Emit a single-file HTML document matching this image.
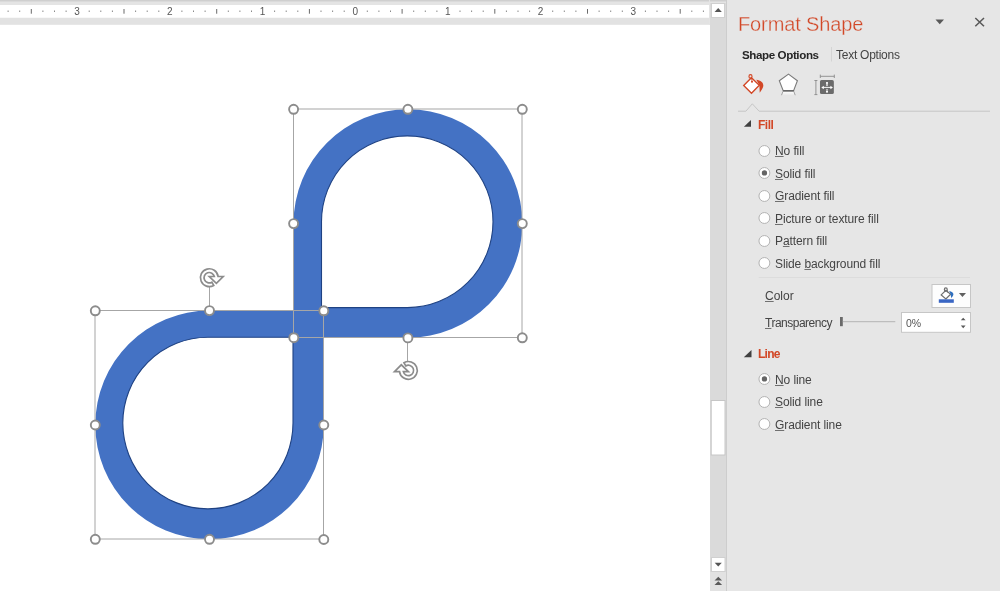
<!DOCTYPE html>
<html><head><meta charset="utf-8"><style>
html,body{margin:0;padding:0;width:1000px;height:591px;overflow:hidden;background:#fff;font-family:"Liberation Sans",sans-serif;}
.a{position:absolute;white-space:nowrap;will-change:transform;}
#panel{position:absolute;left:727px;top:0;width:273px;height:591px;background:#e6e6e6;}
.t{position:absolute;white-space:nowrap;font-size:12px;color:#444;line-height:14px;}
.radio{position:absolute;width:10px;height:10px;border:1px solid #ababab;border-radius:50%;background:#fff;}
.radio.on::after{content:"";position:absolute;left:2.5px;top:2.5px;width:5px;height:5px;border-radius:50%;background:#5a5a5a;}
u{text-decoration:underline;text-underline-offset:1px;text-decoration-thickness:1px;text-decoration-color:#707070;}
</style></head><body>
<svg width="1000" height="591" style="position:absolute;left:0;top:0;will-change:transform">
<!-- top strip -->
<rect x="0" y="0" width="727" height="5" fill="#e4e4e4"/>
<rect x="0" y="0" width="1000" height="1" fill="#cfcfcf"/>
<rect x="0" y="1" width="1000" height="1" fill="#dadada"/>
<rect x="0" y="5" width="709" height="12.75" fill="#fff"/>
<rect x="0" y="17.75" width="710" height="7.05" fill="#e2e2e2"/>
<g font-family="Liberation Sans" font-size="10" fill="#555" text-anchor="middle">
<rect x="7.6" y="10.5" width="1" height="1.5" fill="#8a8a8a"/>
<rect x="19.2" y="10.5" width="1" height="1.5" fill="#8a8a8a"/>
<rect x="30.8" y="9" width="1" height="4.7" fill="#6a6a6a"/>
<rect x="42.4" y="10.5" width="1" height="1.5" fill="#8a8a8a"/>
<rect x="54.0" y="10.5" width="1" height="1.5" fill="#8a8a8a"/>
<rect x="65.6" y="10.5" width="1" height="1.5" fill="#8a8a8a"/>
<text x="77.1" y="15.2">3</text>
<rect x="88.7" y="10.5" width="1" height="1.5" fill="#8a8a8a"/>
<rect x="100.3" y="10.5" width="1" height="1.5" fill="#8a8a8a"/>
<rect x="111.9" y="10.5" width="1" height="1.5" fill="#8a8a8a"/>
<rect x="123.5" y="9" width="1" height="4.7" fill="#6a6a6a"/>
<rect x="135.1" y="10.5" width="1" height="1.5" fill="#8a8a8a"/>
<rect x="146.7" y="10.5" width="1" height="1.5" fill="#8a8a8a"/>
<rect x="158.3" y="10.5" width="1" height="1.5" fill="#8a8a8a"/>
<text x="169.8" y="15.2">2</text>
<rect x="181.4" y="10.5" width="1" height="1.5" fill="#8a8a8a"/>
<rect x="193.0" y="10.5" width="1" height="1.5" fill="#8a8a8a"/>
<rect x="204.6" y="10.5" width="1" height="1.5" fill="#8a8a8a"/>
<rect x="216.2" y="9" width="1" height="4.7" fill="#6a6a6a"/>
<rect x="227.8" y="10.5" width="1" height="1.5" fill="#8a8a8a"/>
<rect x="239.4" y="10.5" width="1" height="1.5" fill="#8a8a8a"/>
<rect x="251.0" y="10.5" width="1" height="1.5" fill="#8a8a8a"/>
<text x="262.6" y="15.2">1</text>
<rect x="274.1" y="10.5" width="1" height="1.5" fill="#8a8a8a"/>
<rect x="285.7" y="10.5" width="1" height="1.5" fill="#8a8a8a"/>
<rect x="297.3" y="10.5" width="1" height="1.5" fill="#8a8a8a"/>
<rect x="308.9" y="9" width="1" height="4.7" fill="#6a6a6a"/>
<rect x="320.5" y="10.5" width="1" height="1.5" fill="#8a8a8a"/>
<rect x="332.1" y="10.5" width="1" height="1.5" fill="#8a8a8a"/>
<rect x="343.7" y="10.5" width="1" height="1.5" fill="#8a8a8a"/>
<text x="355.2" y="15.2">0</text>
<rect x="366.8" y="10.5" width="1" height="1.5" fill="#8a8a8a"/>
<rect x="378.4" y="10.5" width="1" height="1.5" fill="#8a8a8a"/>
<rect x="390.0" y="10.5" width="1" height="1.5" fill="#8a8a8a"/>
<rect x="401.6" y="9" width="1" height="4.7" fill="#6a6a6a"/>
<rect x="413.2" y="10.5" width="1" height="1.5" fill="#8a8a8a"/>
<rect x="424.8" y="10.5" width="1" height="1.5" fill="#8a8a8a"/>
<rect x="436.4" y="10.5" width="1" height="1.5" fill="#8a8a8a"/>
<text x="447.9" y="15.2">1</text>
<rect x="459.5" y="10.5" width="1" height="1.5" fill="#8a8a8a"/>
<rect x="471.1" y="10.5" width="1" height="1.5" fill="#8a8a8a"/>
<rect x="482.7" y="10.5" width="1" height="1.5" fill="#8a8a8a"/>
<rect x="494.3" y="9" width="1" height="4.7" fill="#6a6a6a"/>
<rect x="505.9" y="10.5" width="1" height="1.5" fill="#8a8a8a"/>
<rect x="517.5" y="10.5" width="1" height="1.5" fill="#8a8a8a"/>
<rect x="529.1" y="10.5" width="1" height="1.5" fill="#8a8a8a"/>
<text x="540.6" y="15.2">2</text>
<rect x="552.2" y="10.5" width="1" height="1.5" fill="#8a8a8a"/>
<rect x="563.8" y="10.5" width="1" height="1.5" fill="#8a8a8a"/>
<rect x="575.4" y="10.5" width="1" height="1.5" fill="#8a8a8a"/>
<rect x="587.0" y="9" width="1" height="4.7" fill="#6a6a6a"/>
<rect x="598.6" y="10.5" width="1" height="1.5" fill="#8a8a8a"/>
<rect x="610.2" y="10.5" width="1" height="1.5" fill="#8a8a8a"/>
<rect x="621.8" y="10.5" width="1" height="1.5" fill="#8a8a8a"/>
<text x="633.4" y="15.2">3</text>
<rect x="644.9" y="10.5" width="1" height="1.5" fill="#8a8a8a"/>
<rect x="656.5" y="10.5" width="1" height="1.5" fill="#8a8a8a"/>
<rect x="668.1" y="10.5" width="1" height="1.5" fill="#8a8a8a"/>
<rect x="679.7" y="9" width="1" height="4.7" fill="#6a6a6a"/>
<rect x="691.3" y="10.5" width="1" height="1.5" fill="#8a8a8a"/>
<rect x="702.9" y="10.5" width="1" height="1.5" fill="#8a8a8a"/>
</g>
<!-- scrollbar -->
<rect x="709" y="0" width="1" height="24.5" fill="#e4e4e4"/>
<rect x="710" y="3" width="16" height="588" fill="#dadada"/>
<rect x="726" y="0" width="1" height="591" fill="#cdcdcd"/>
<rect x="711.5" y="3.5" width="13" height="14" fill="#fff" stroke="#d0d0d0"/>
<path d="M714.6 11.9 L718.2 8.1 L721.8 11.9 Z" fill="#555"/>
<rect x="711.2" y="400.5" width="13.8" height="54.5" fill="#fff" stroke="#c6c6c6"/>
<rect x="711.5" y="557.5" width="13.5" height="14" fill="#fff" stroke="#d0d0d0"/>
<path d="M714.7 562.8 L721.8 562.8 L718.25 566.5 Z" fill="#555"/>
<rect x="710" y="572" width="16" height="19" fill="#e2e2e2"/>
<path d="M714.5 580.6 L718.3 576.7 L722.1 580.6 Z M714.5 584.9 L718.3 581.2 L722.1 584.9 Z" fill="#5a5a5a"/>

<!-- shapes -->
<path fill="#4472c4" fill-rule="evenodd" d="M293.5 337.7 L293.5 223.5 A114.45 114.2 0 0 1 407.95 109.3 A114.45 114.2 0 0 1 522.4 223.5 A114.45 114.2 0 0 1 407.95 337.7 Z
 M321.5 307.6 L321.5 221.75 A85.75 85.85 0 0 1 407.25 135.9 A85.75 85.85 0 0 1 493 221.75 A85.75 85.85 0 0 1 407.25 307.6 Z"/>
<path fill="none" stroke="#1f4283" stroke-width="1.1" d="M321.5 307.6 L321.5 221.75 A85.75 85.85 0 0 1 407.25 135.9 A85.75 85.85 0 0 1 493 221.75 A85.75 85.85 0 0 1 407.25 307.6 Z"/>
<path fill="#4472c4" fill-rule="evenodd" d="M323.8 310.5 L323.8 424.9 A114.25 114.4 0 0 1 209.55 539.3 A114.25 114.4 0 0 1 95.3 424.9 A114.25 114.4 0 0 1 209.55 310.5 Z
 M293 337.3 L293 423.1 A85.1 85.8 0 0 1 207.9 508.9 A85.1 85.8 0 0 1 122.8 423.1 A85.1 85.8 0 0 1 207.9 337.3 Z"/>
<path fill="none" stroke="#1f4283" stroke-width="1.1" d="M293 337.3 L293 423.1 A85.1 85.8 0 0 1 207.9 508.9 A85.1 85.8 0 0 1 122.8 423.1 A85.1 85.8 0 0 1 207.9 337.3 Z"/>

<!-- selection boxes -->
<g fill="none" stroke="#a6a6a6" stroke-width="1">
<rect x="293.5" y="109" width="228.5" height="228.5"/>
<rect x="95" y="310.5" width="228.5" height="228.5"/>
<line x1="209.5" y1="287" x2="209.5" y2="310.5"/>
<line x1="407.5" y1="337.5" x2="407.5" y2="361"/>
</g>
<g fill="#fff" stroke="#8c8c8c" stroke-width="1.9">
<circle cx="293.6" cy="109.3" r="4.5"/><circle cx="407.9" cy="109.3" r="4.5"/><circle cx="522.3" cy="109.3" r="4.5"/>
<circle cx="293.6" cy="223.6" r="4.5"/><circle cx="522.3" cy="223.6" r="4.5"/>
<circle cx="293.8" cy="337.7" r="4.5"/><circle cx="407.9" cy="337.9" r="4.5"/><circle cx="522.3" cy="337.8" r="4.5"/>
<circle cx="95.3" cy="310.8" r="4.5"/><circle cx="209.5" cy="310.6" r="4.5"/><circle cx="323.8" cy="310.8" r="4.5"/>
<circle cx="95.3" cy="425" r="4.5"/><circle cx="323.8" cy="425" r="4.5"/>
<circle cx="95.3" cy="539.3" r="4.5"/><circle cx="209.5" cy="539.3" r="4.5"/><circle cx="323.8" cy="539.5" r="4.5"/>
</g>
<!-- rotation handles -->
<g transform="translate(209.27 277.7)"><path d="M4.45 7.7 A8.9 8.9 0 1 1 8.86 -1.18 L13.9 -1.18 L7.1 5.6 L0 -1.18 L5.06 -1.18 A5.2 5.2 0 1 0 2.6 4.5 Z" fill="#fff" stroke="#8c8c8c" stroke-width="1.7" stroke-linejoin="miter"/></g>
<g transform="translate(408.4 370.4) rotate(180)"><path d="M4.45 7.7 A8.9 8.9 0 1 1 8.86 -1.18 L13.9 -1.18 L7.1 5.6 L0 -1.18 L5.06 -1.18 A5.2 5.2 0 1 0 2.6 4.5 Z" fill="#fff" stroke="#8c8c8c" stroke-width="1.7" stroke-linejoin="miter"/></g>
</svg>

<div id="panel"></div>
<svg width="1000" height="591" style="position:absolute;left:0;top:0;pointer-events:none">
<!-- dropdown and close -->
<path d="M935.5 19.5 L944 19.5 L939.75 24.2 Z" fill="#595959"/>
<path d="M975.3 18 L984 26.2 M984 18 L975.3 26.2" stroke="#595959" stroke-width="1.55"/>
<!-- tab separator -->
<rect x="831" y="47" width="1" height="14.5" fill="#d4d4d4"/>
<!-- fill icon -->
<g>
<path d="M743.7 85.5 L751.4 77.8 L759.3 85.3 L751.5 93.2 Z" fill="#fff" stroke="#d24726" stroke-width="1.35" stroke-linejoin="miter"/>
<ellipse cx="750.5" cy="76.4" rx="1.55" ry="1.75" fill="none" stroke="#d24726" stroke-width="1.1"/>
<path d="M751.4 78 L752 81" stroke="#d24726" stroke-width="0.8"/>
<circle cx="752" cy="81.7" r="1.05" fill="#d24726"/>
<path d="M756.3 79.7 C760.5 80.3 763.6 82.3 763.3 86 C763 88.6 761 90.6 759.7 92.8 L759.4 85.3 Z" fill="#d24726"/>
</g>
<!-- pentagon icon -->
<defs><linearGradient id="pg" x1="0" y1="0" x2="0" y2="1"><stop offset="0" stop-color="#fff"/><stop offset="1" stop-color="#fff" stop-opacity="0"/></linearGradient></defs>
<path d="M783 91.3 L794 91.3 L795.2 95.5 L781.6 95.5 Z" fill="url(#pg)"/>
<path d="M788.5 74.1 L797.4 80.7 L793.6 90.6 L783.2 90.6 L779.3 80.7 Z" fill="#fff" stroke="#7a7a7a" stroke-width="1.1"/>
<rect x="783" y="90" width="11" height="1.6" fill="#666"/>
<path d="M783 91.3 L781.5 95.2 M793.8 91.3 L795.2 95.2" stroke="#9a9a9a" stroke-width="0.9"/>
<!-- size icon -->
<rect x="819.98" y="80.1" width="13.87" height="13.9" rx="1.6" fill="#6b6b6b"/>
<rect x="826" y="82.1" width="2" height="1.8" fill="#fafafa"/><rect x="826" y="83.9" width="2" height="2.2" fill="#c4c4c4"/>
<rect x="826" y="88.9" width="2" height="1.8" fill="#b8b8b8"/><rect x="826" y="90.8" width="2" height="1.8" fill="#fafafa"/>
<path d="M823 87.45 L831.2 87.45" stroke="#e6e6e6" stroke-width="1.1"/>
<path d="M821.3 87.45 L823.8 85.7 L823.8 89.2 Z M832.9 87.45 L830.4 85.7 L830.4 89.2 Z" fill="#fff"/>
<path d="M820.3 76.3 L834.3 76.3 M820.3 74.6 L820.3 78 M834.3 74.6 L834.3 78" stroke="#8a8a8a" stroke-width="0.9"/>
<path d="M815.9 80.5 L815.9 94.6 M814.4 80.5 L817.4 80.5 M814.4 94.6 L817.4 94.6" stroke="#8a8a8a" stroke-width="0.9"/>
<!-- line with notch -->
<path d="M738 111.2 L745.9 111.2 L752.3 103.8 L759.1 111.2 L990 111.2" fill="none" stroke="#c6c6c6" stroke-width="1"/>
<!-- fill header triangle -->
<path d="M743.9 126.8 L751 120 L751 126.8 Z" fill="#404040"/>
<path d="M743.8 357.2 L751.5 350 L751.5 357.2 Z" fill="#404040"/>
<!-- separator -->
<rect x="758.7" y="277" width="211.3" height="1" fill="#dcdcdc"/>
<!-- color button -->
<rect x="932" y="284.5" width="38.5" height="23" fill="#fdfdfd" stroke="#c6c6c6" stroke-width="1"/>
<path d="M941.2 294.9 L945.9 290.3 L950.6 294.3 L945.9 298.9 Z" fill="#fff" stroke="#6e6e6e" stroke-width="1.2"/>
<ellipse cx="945.8" cy="289.6" rx="1.45" ry="1.75" fill="none" stroke="#6e6e6e" stroke-width="1.2"/>
<path d="M947.4 290.3 L947.4 292.6" stroke="#6e6e6e" stroke-width="0.9"/>
<path d="M949.2 291.1 C951.6 291.6 953.6 292.6 953.4 294.5 C953.2 296 952 297 951.3 298.2 L950.6 294.3 Z" fill="#2e6fbf"/>
<rect x="938.8" y="299.3" width="15" height="3.5" fill="#3a66c4"/>
<path d="M958.9 293 L966 293 L962.45 296.9 Z" fill="#606060"/>
<!-- slider -->
<rect x="840" y="317" width="2.8" height="9.2" fill="#6a6a6a"/>
<rect x="842.8" y="321.2" width="52.5" height="1" fill="#b4b4b4"/>
<!-- spin box -->
<rect x="901.5" y="312.5" width="69" height="19.8" fill="#fff" stroke="#c6c6c6" stroke-width="1"/>
<path d="M960.8 320.3 L965.6 320.3 L963.2 317.8 Z M960.8 325.6 L965.6 325.6 L963.2 328.2 Z" fill="#595959"/>
</svg>
<div class="a" style="left:737.9px;top:14.17px;font-size:20px;line-height:20px;color:#d24726;font-weight:400;letter-spacing:-0.12px;-webkit-text-stroke:0.3px #e6e6e6;">Format Shape</div>
<div class="a" style="left:741.6px;top:48.68px;font-size:11.6px;line-height:11.6px;color:#262626;font-weight:700;letter-spacing:-0.4px;">Shape Options</div>
<div class="a" style="left:835.8px;top:49.04px;font-size:12px;line-height:12px;color:#444;font-weight:400;letter-spacing:-0.25px;">Text Options</div>
<div class="a" style="left:758.0px;top:118.84px;font-size:12px;line-height:12px;color:#d24726;font-weight:700;letter-spacing:-0.5px;">Fill</div>
<svg class="a" style="left:756px;top:142.80px" width="17" height="17"><circle cx="8.4" cy="8" r="5.45" fill="#fff" stroke="#b2b2b2" stroke-width="1"/></svg>
<div class="a" style="left:774.8px;top:145.34px;font-size:12px;line-height:12px;color:#444;font-weight:400;letter-spacing:-0.1px;"><u>N</u>o fill</div>
<svg class="a" style="left:756px;top:165.20px" width="17" height="17"><circle cx="8.4" cy="8" r="5.45" fill="#fff" stroke="#b2b2b2" stroke-width="1"/><circle cx="8.45" cy="7.9" r="2.65" fill="#656565"/></svg>
<div class="a" style="left:774.8px;top:167.74px;font-size:12px;line-height:12px;color:#444;font-weight:400;letter-spacing:-0.1px;"><u>S</u>olid fill</div>
<svg class="a" style="left:756px;top:187.70px" width="17" height="17"><circle cx="8.4" cy="8" r="5.45" fill="#fff" stroke="#b2b2b2" stroke-width="1"/></svg>
<div class="a" style="left:774.8px;top:190.24px;font-size:12px;line-height:12px;color:#444;font-weight:400;letter-spacing:-0.1px;"><u>G</u>radient fill</div>
<svg class="a" style="left:756px;top:210.40px" width="17" height="17"><circle cx="8.4" cy="8" r="5.45" fill="#fff" stroke="#b2b2b2" stroke-width="1"/></svg>
<div class="a" style="left:774.8px;top:212.94px;font-size:12px;line-height:12px;color:#444;font-weight:400;letter-spacing:-0.1px;"><u>P</u>icture or texture fill</div>
<svg class="a" style="left:756px;top:232.80px" width="17" height="17"><circle cx="8.4" cy="8" r="5.45" fill="#fff" stroke="#b2b2b2" stroke-width="1"/></svg>
<div class="a" style="left:774.8px;top:235.34px;font-size:12px;line-height:12px;color:#444;font-weight:400;letter-spacing:-0.1px;">P<u>a</u>ttern fill</div>
<svg class="a" style="left:756px;top:255.00px" width="17" height="17"><circle cx="8.4" cy="8" r="5.45" fill="#fff" stroke="#b2b2b2" stroke-width="1"/></svg>
<div class="a" style="left:774.8px;top:257.54px;font-size:12px;line-height:12px;color:#444;font-weight:400;letter-spacing:-0.1px;">Slide <u>b</u>ackground fill</div>
<div class="a" style="left:765.0px;top:289.94px;font-size:12px;line-height:12px;color:#444;font-weight:400;letter-spacing:0px;"><u>C</u>olor</div>
<div class="a" style="left:765.2px;top:317.34px;font-size:12px;line-height:12px;color:#444;font-weight:400;letter-spacing:-0.5px;"><u>T</u>ransparency</div>
<div class="a" style="left:757.8px;top:347.64px;font-size:12px;line-height:12px;color:#d24726;font-weight:700;letter-spacing:-0.75px;">Line</div>
<svg class="a" style="left:756px;top:371.20px" width="17" height="17"><circle cx="8.4" cy="8" r="5.45" fill="#fff" stroke="#b2b2b2" stroke-width="1"/><circle cx="8.45" cy="7.9" r="2.65" fill="#656565"/></svg>
<div class="a" style="left:774.8px;top:373.74px;font-size:12px;line-height:12px;color:#444;font-weight:400;letter-spacing:-0.1px;"><u>N</u>o line</div>
<svg class="a" style="left:756px;top:393.60px" width="17" height="17"><circle cx="8.4" cy="8" r="5.45" fill="#fff" stroke="#b2b2b2" stroke-width="1"/></svg>
<div class="a" style="left:774.8px;top:396.14px;font-size:12px;line-height:12px;color:#444;font-weight:400;letter-spacing:-0.1px;"><u>S</u>olid line</div>
<svg class="a" style="left:756px;top:416.30px" width="17" height="17"><circle cx="8.4" cy="8" r="5.45" fill="#fff" stroke="#b2b2b2" stroke-width="1"/></svg>
<div class="a" style="left:774.8px;top:418.84px;font-size:12px;line-height:12px;color:#444;font-weight:400;letter-spacing:-0.1px;"><u>G</u>radient line</div>
<div class="a" style="left:906.0px;top:317.51px;font-size:10.5px;line-height:10.5px;color:#555;font-weight:400;letter-spacing:0px;">0%</div>

</body></html>
